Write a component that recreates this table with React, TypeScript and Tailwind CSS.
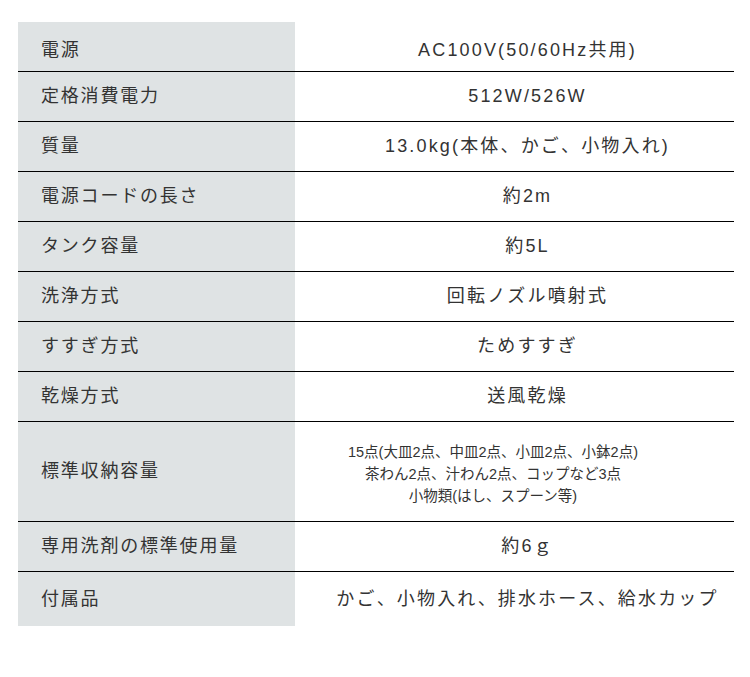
import React from "react";

const rows: { label: string; value: React.ReactNode; h?: string; small?: boolean }[] = [
  { label: "電源", value: "AC100V(50/60Hz共用)" },
  { label: "定格消費電力", value: "512W/526W" },
  { label: "質量", value: "13.0kg(本体、かご、小物入れ)" },
  { label: "電源コードの長さ", value: "約2m" },
  { label: "タンク容量", value: "約5L" },
  { label: "洗浄方式", value: "回転ノズル噴射式" },
  { label: "すすぎ方式", value: "ためすすぎ" },
  { label: "乾燥方式", value: "送風乾燥" },
  {
    label: "標準収納容量",
    value: (
      <>
        15点(大皿2点、中皿2点、小皿2点、小鉢2点)
        <br />
        茶わん2点、汁わん2点、コップなど3点
        <br />
        小物類(はし、スプーン等)
      </>
    ),
    h: "h-[100px]",
    small: true,
  },
  { label: "専用洗剤の標準使用量", value: "約6ｇ" },
  { label: "付属品", value: "かご、小物入れ、排水ホース、給水カップ", h: "h-[54px]" },
];

export default function App() {
  return (
    <div
      className="w-[750px] h-[677px] bg-white pt-[22px] pl-[18px]"
      style={{ fontFamily: '"Liberation Sans", "Noto Sans CJK JP", sans-serif' }}
    >
      <div className="w-[716px] flex flex-col text-[#333]">
        {rows.map((r, i) => {
          const last = i === rows.length - 1;
          const first = i === 0;
          return (
            <div
              key={i}
              className={`flex ${r.h ?? "h-[50px]"} ${last ? "" : "border-b border-black"}`}
            >
              <div
                className={`w-[277px] bg-[#dfe3e4] flex items-center pl-[23px] text-[18px] tracking-[0.1em] ${
                  first ? "pt-[7px]" : ""
                }`}
              >
                {r.label}
              </div>
              <div
                className={`flex-1 flex items-center justify-center text-center ${
                  r.small
                    ? "pr-[43px] pt-[5px] text-[14.5px] leading-[22px]"
                    : "pl-[26px] text-[18px] tracking-[0.12em]"
                } ${first ? "pt-[7px]" : ""}`}
              >
                <div>{r.value}</div>
              </div>
            </div>
          );
        })}
      </div>
    </div>
  );
}
